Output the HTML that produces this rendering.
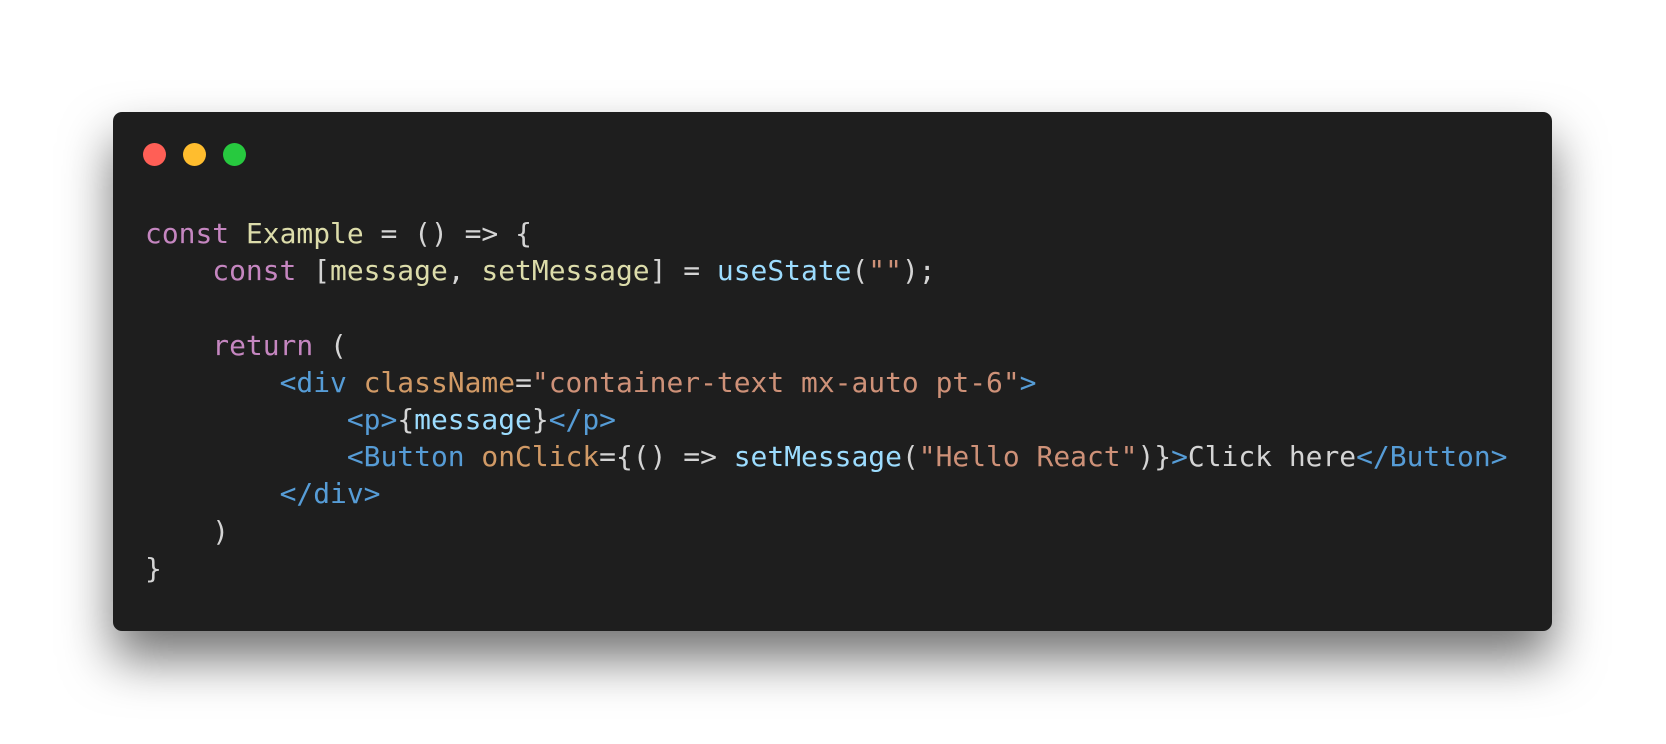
<!DOCTYPE html>
<html><head><meta charset="utf-8"><style>
html,body{margin:0;padding:0;width:1666px;height:744px;background:#fff;overflow:hidden}
.win{position:absolute;left:113px;top:112px;width:1439px;height:519px;background:#1e1e1e;border-radius:9px;box-shadow:0 28px 50px rgba(0,0,0,0.55)}
.dot{position:absolute;top:143px;width:23px;height:23px;border-radius:50%}
pre{position:absolute;left:145px;top:215px;margin:0;font-family:"DejaVu Sans Mono","Liberation Mono",monospace;font-size:27.95px;line-height:37.2px;color:#d4d4d4}
.k{color:#c586c0}.y{color:#dcdcaa}.b{color:#9cdcfe}.t{color:#569cd6}.a{color:#d19a66}.s{color:#ce9178}
</style></head><body>
<div class="win"></div>
<div class="dot" style="left:143px;background:#ff5f56"></div>
<div class="dot" style="left:183px;background:#ffbd2e"></div>
<div class="dot" style="left:223px;background:#27c93f"></div>
<pre><span class="k">const</span> <span class="y">Example</span> = () =&gt; {
    <span class="k">const</span> [<span class="y">message</span>, <span class="y">setMessage</span>] = <span class="b">useState</span>(<span class="s">""</span>);

    <span class="k">return</span> (
        <span class="t">&lt;div</span> <span class="a">className</span>=<span class="s">"container-text mx-auto pt-6"</span><span class="t">&gt;</span>
            <span class="t">&lt;p&gt;</span>{<span class="b">message</span>}<span class="t">&lt;/p&gt;</span>
            <span class="t">&lt;Button</span> <span class="a">onClick</span>={() =&gt; <span class="b">setMessage</span>(<span class="s">"Hello React"</span>)}<span class="t">&gt;</span>Click here<span class="t">&lt;/Button&gt;</span>
        <span class="t">&lt;/div&gt;</span>
    )
}</pre>
</body></html>
